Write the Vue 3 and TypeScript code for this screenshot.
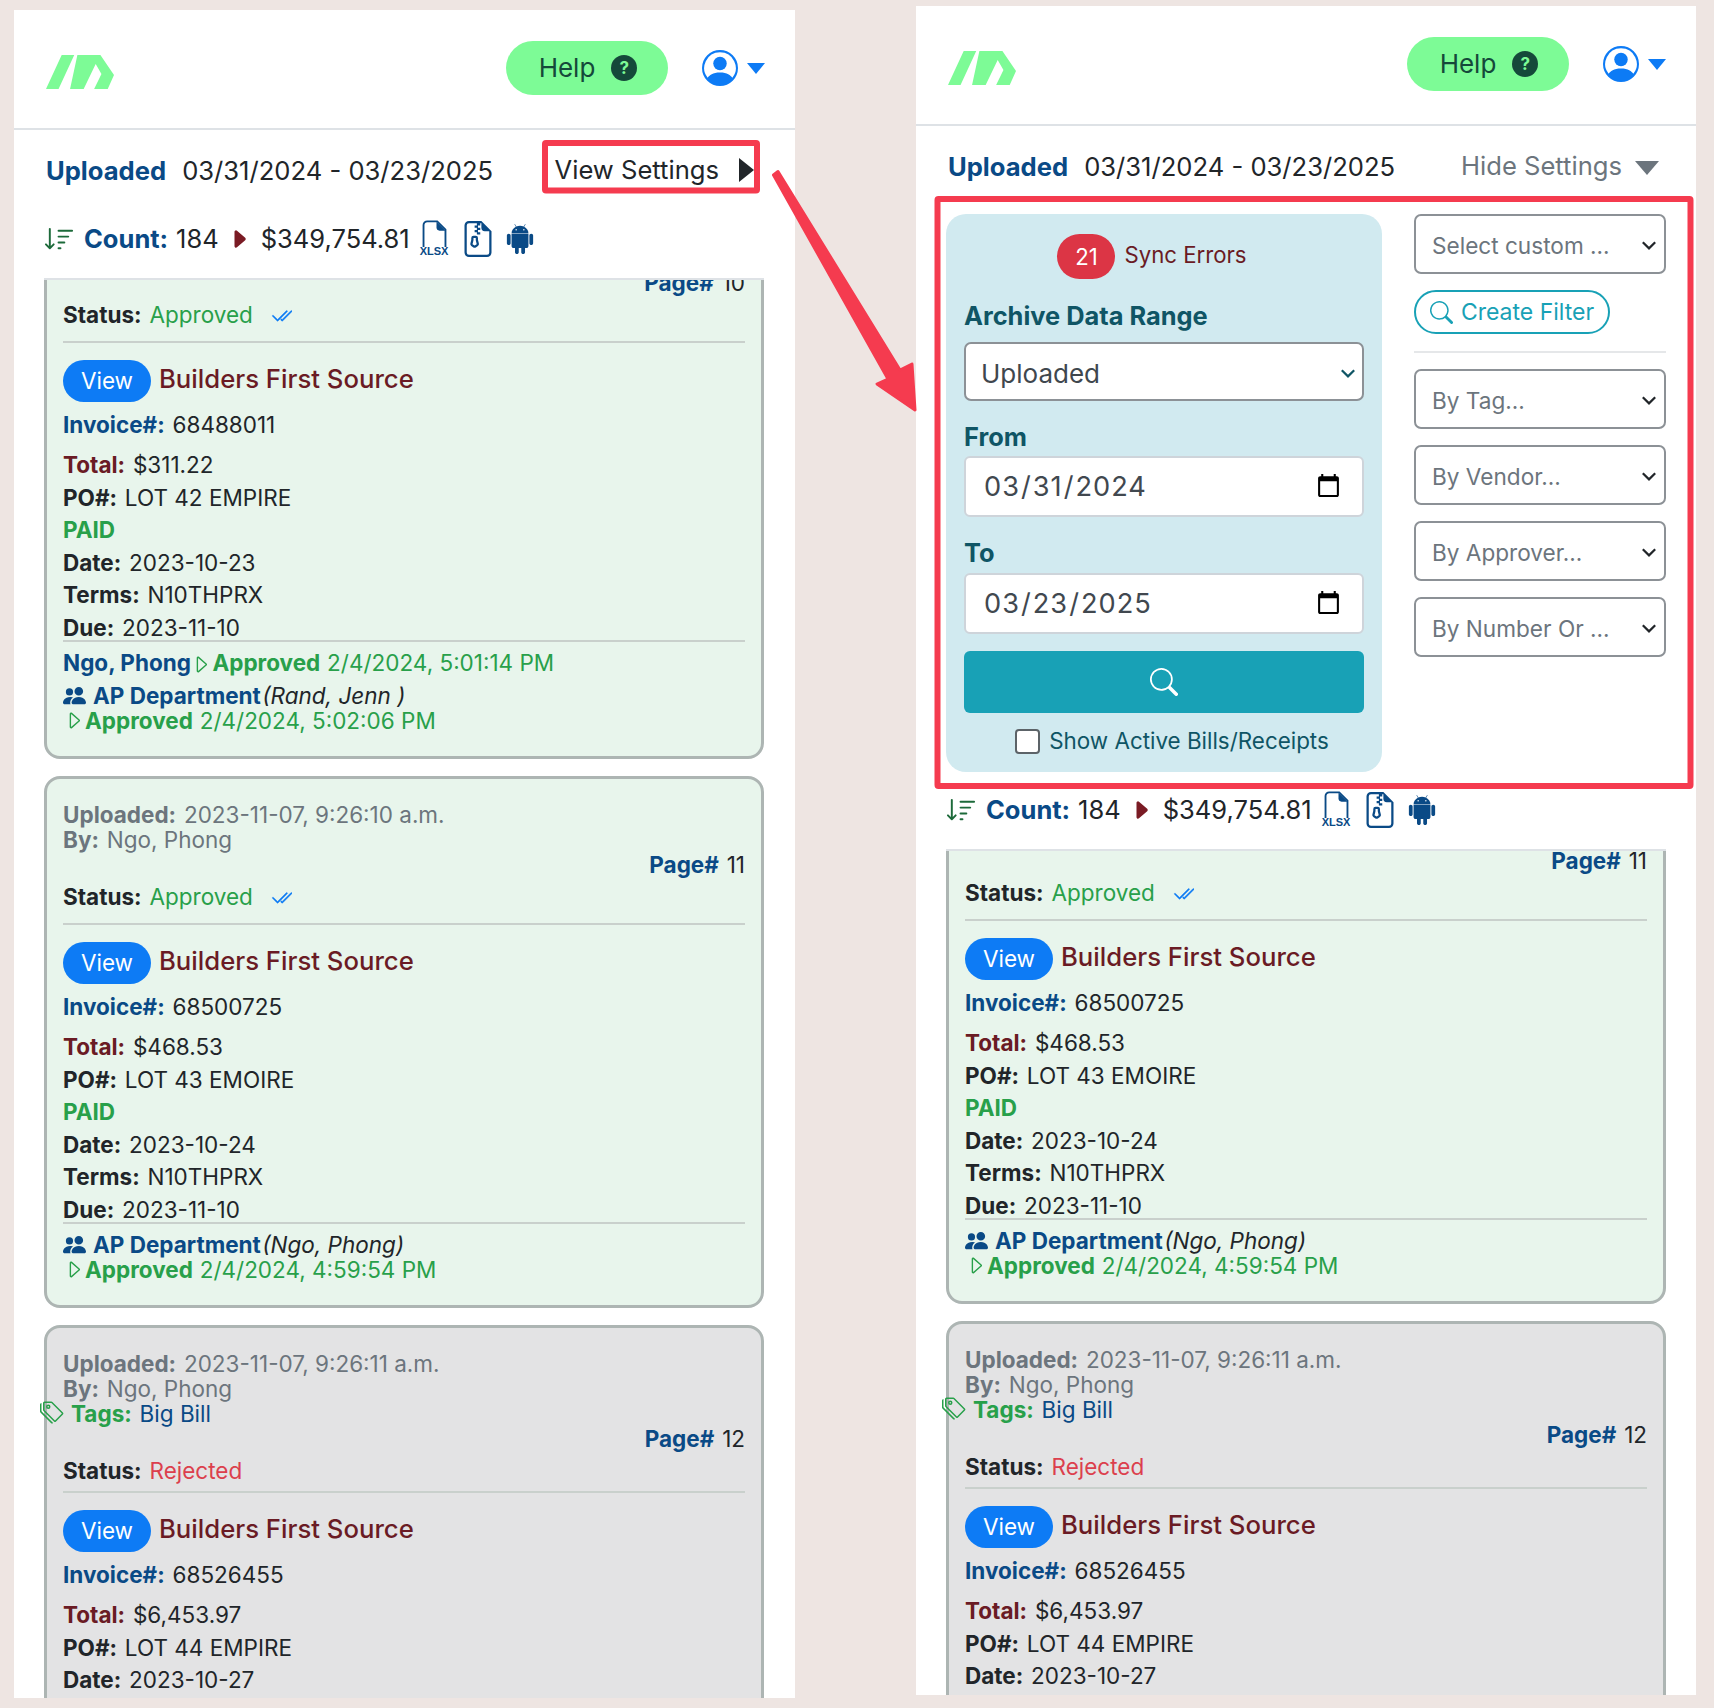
<script setup lang="ts">
interface Approval { name?: string; group?: string; who?: string; when: string }
interface Bill {
  uploaded: string; by: string; tags?: string; page: number; status: string; rejected?: boolean;
  invoice: string; total: string; po: string; paid: boolean; date: string; terms?: string; due?: string;
  approvals: Approval[];
}
const card10: Bill = { uploaded: '2023-11-07, 9:26:10 a.m.', by: 'Ngo, Phong', page: 10, status: 'Approved',
  invoice: '68488011', total: '$311.22', po: 'LOT 42 EMPIRE', paid: true, date: '2023-10-23', terms: 'N10THPRX', due: '2023-11-10',
  approvals: [ { name: 'Ngo, Phong', when: '2/4/2024, 5:01:14 PM' }, { group: 'AP Department', who: '(Rand, Jenn )', when: '2/4/2024, 5:02:06 PM' } ] }
const card11: Bill = { uploaded: '2023-11-07, 9:26:10 a.m.', by: 'Ngo, Phong', page: 11, status: 'Approved',
  invoice: '68500725', total: '$468.53', po: 'LOT 43 EMOIRE', paid: true, date: '2023-10-24', terms: 'N10THPRX', due: '2023-11-10',
  approvals: [ { group: 'AP Department', who: '(Ngo, Phong)', when: '2/4/2024, 4:59:54 PM' } ] }
const card12: Bill = { uploaded: '2023-11-07, 9:26:11 a.m.', by: 'Ngo, Phong', tags: 'Big Bill', page: 12, status: 'Rejected', rejected: true,
  invoice: '68526455', total: '$6,453.97', po: 'LOT 44 EMPIRE', paid: false, date: '2023-10-27', approvals: [] }
const panels = [
  { key: 'a', open: false, bills: [card10, card11, card12] },
  { key: 'b', open: true, bills: [card11, card12] },
]
const filters = ['By Tag...', 'By Vendor...', 'By Approver...', 'By Number Or ...']
</script>

<template>
  <div class="page">
    <section v-for="p in panels" :key="p.key" class="panel" :class="{ open: p.open }">
      <header class="top">
        <svg class="logo" viewBox="0 0 65 34" preserveAspectRatio="none"><path d="M15 0H27L12 34H0ZM30 0H52L65 20 59 34H46L53 19 47.5 9 36 34H23Z" /></svg>
        <div class="top-right">
          <div class="help">Help <span class="q">?</span></div>
          <svg class="user" viewBox="0 0 16 16"><path d="M11 6a3 3 0 1 1-6 0 3 3 0 0 1 6 0z" /><path fill-rule="evenodd" d="M0 8a8 8 0 1 1 16 0A8 8 0 0 1 0 8zm8-7a7 7 0 0 0-5.468 11.37C3.242 11.226 4.805 10 8 10s4.757 1.225 5.468 2.37A7 7 0 0 0 8 1z" /></svg>
          <span class="user-caret"></span>
        </div>
      </header>

      <div class="range">
        <span class="navy b">Uploaded</span>
        <span class="dates">03/31/2024 - 03/23/2025</span>
        <span class="toggle" :class="{ muted: p.open }">
          {{ p.open ? 'Hide Settings' : 'View Settings' }}
          <span :class="p.open ? 'tri-down' : 'tri-right'"></span>
        </span>
      </div>

      <div v-if="p.open" class="settings">
        <div class="range-box">
          <div class="sync"><span class="badge">21</span><span class="sync-text">Sync Errors</span></div>
          <div class="lbl lbl-archive">Archive Data Range</div>
          <div class="sel-wrap teal">
            <select class="sel-main"><option>Uploaded</option></select>
            <svg class="chev" viewBox="0 0 16 16"><path d="M2.5 5.5 8 11l5.5-5.5" /></svg>
          </div>
          <div class="lbl lbl-from">From</div>
          <input class="date" type="date" value="2024-03-31" />
          <div class="lbl lbl-to">To</div>
          <input class="date date-to" type="date" value="2025-03-23" />
          <button class="go" type="button">
            <svg viewBox="0 0 16 16" width="28" height="28"><path d="M11.742 10.344a6.5 6.5 0 1 0-1.397 1.398h-.001c.03.04.062.078.098.115l3.85 3.85a1 1 0 0 0 1.415-1.414l-3.85-3.85a1.007 1.007 0 0 0-.115-.1zM12 6.5a5.5 5.5 0 1 1-11 0 5.5 5.5 0 0 1 11 0z" /></svg>
          </button>
          <label class="active"><span class="box"></span>Show Active Bills/Receipts</label>
        </div>
        <div class="filter-col">
          <div class="sel-wrap">
            <select class="sel"><option>Select custom ...</option></select>
            <svg class="chev" viewBox="0 0 16 16"><path d="M2.5 5.5 8 11l5.5-5.5" /></svg>
          </div>
          <div class="create">
            <svg viewBox="0 0 16 16" width="23" height="23"><path d="M11.742 10.344a6.5 6.5 0 1 0-1.397 1.398h-.001c.03.04.062.078.098.115l3.85 3.85a1 1 0 0 0 1.415-1.414l-3.85-3.85a1.007 1.007 0 0 0-.115-.1zM12 6.5a5.5 5.5 0 1 1-11 0 5.5 5.5 0 0 1 11 0z" /></svg>
            Create Filter
          </div>
          <hr class="filter-hr" />
          <div v-for="f in filters" :key="f" class="sel-wrap by">
            <select class="sel"><option>{{ f }}</option></select>
            <svg class="chev" viewBox="0 0 16 16"><path d="M2.5 5.5 8 11l5.5-5.5" /></svg>
          </div>
        </div>
      </div>

      <div class="count">
        <svg class="ic-sort" viewBox="0 0 16 16"><path d="M3.5 2.5a.5.5 0 0 0-1 0v8.793l-1.146-1.147a.5.5 0 0 0-.708.708l2 1.999.007.007a.497.497 0 0 0 .7-.006l2-2a.5.5 0 0 0-.707-.708L3.5 11.293zm3.5 1a.5.5 0 0 1 .5-.5h7a.5.5 0 0 1 0 1h-7a.5.5 0 0 1-.5-.5M7.5 6a.5.5 0 0 0 0 1h5a.5.5 0 0 0 0-1zm0 3a.5.5 0 0 0 0 1h3a.5.5 0 0 0 0-1zm0 3a.5.5 0 0 0 0 1h1a.5.5 0 0 0 0-1z" /></svg>
        <span class="navy b">Count:</span>
        <span class="n184">184</span>
        <svg class="ic-caret" viewBox="0 0 16 16"><path d="m12.14 8.753-5.482 4.796c-.646.566-1.658.106-1.658-.753V3.204a1 1 0 0 1 1.659-.753l5.48 4.796a1 1 0 0 1 0 1.506z" /></svg>
        <span>$349,754.81</span>
        <span class="xlsx">
          <svg viewBox="0 0 16 16"><path fill="none" stroke="currentColor" stroke-width="1.1" d="M1.5 16V3a2.2 2.2 0 0 1 2.2-2.2H9.6L14.5 5.7V16" /><path d="M9.2 1 14.5 6.3H11a1.8 1.8 0 0 1-1.8-1.8z" /></svg>
          <em>XLSX</em>
        </span>
        <svg class="ic-zip" viewBox="2 0 12 16"><path d="M5 7.5a1 1 0 0 1 1-1h1a1 1 0 0 1 1 1v.938l.4 1.599a1 1 0 0 1-.416 1.074l-.93.62a1 1 0 0 1-1.11 0l-.929-.62a1 1 0 0 1-.415-1.074L5 8.438zm2 0H6v.938a1 1 0 0 1-.03.243l-.4 1.598.93.62.93-.62-.4-1.598A1 1 0 0 1 7 8.438z" /><path fill-rule="evenodd" d="M14 4.5V14a2 2 0 0 1-2 2H4a2 2 0 0 1-2-2V2a2 2 0 0 1 2-2h5.5zm-3 0A1.5 1.5 0 0 1 9.5 3V1h-2v1h-1v1h1v1h-1v1h1v1H9V5H8V4h1V3H8V2h1V1H4a1 1 0 0 0-1 1v12a1 1 0 0 0 1 1h8a1 1 0 0 0 1-1V4.5z" /></svg>
        <svg class="ic-droid" viewBox="0 0 16 16"><path d="m10.213 1.471.691-1.26q.069-.124-.048-.192-.128-.057-.195.058l-.7 1.27A4.8 4.8 0 0 0 8.005.941q-1.032 0-1.956.404l-.7-1.27Q5.281-.037 5.154.02q-.117.069-.049.193l.691 1.259a4.25 4.25 0 0 0-1.673 1.476A3.7 3.7 0 0 0 3.5 5.02h9q0-1.125-.623-2.072a4.27 4.27 0 0 0-1.664-1.476ZM6.22 3.303a.37.37 0 0 1-.267.11.35.35 0 0 1-.263-.11.37.37 0 0 1-.107-.264.37.37 0 0 1 .107-.265.35.35 0 0 1 .263-.11q.155 0 .267.11a.36.36 0 0 1 .112.265.36.36 0 0 1-.112.264m4.101 0a.35.35 0 0 1-.262.11.37.37 0 0 1-.268-.11.36.36 0 0 1-.112-.264q0-.154.112-.265a.37.37 0 0 1 .268-.11q.155 0 .262.11a.37.37 0 0 1 .107.265q0 .153-.107.264M3.5 11.77q0 .441.311.75.311.306.76.307h.758l.01 2.182q0 .414.292.703a.96.96 0 0 0 .7.288.97.97 0 0 0 .71-.288.95.95 0 0 0 .292-.703v-2.182h1.343v2.182q0 .414.293.703a.97.97 0 0 0 .71.288.97.97 0 0 0 .71-.288.95.95 0 0 0 .292-.703v-2.182h.76q.436 0 .749-.308.31-.307.311-.75V5.365h-9zm10.495-6.587a.98.98 0 0 0-.702.278.9.9 0 0 0-.293.685v4.063q0 .406.293.69a.97.97 0 0 0 .702.284q.42 0 .712-.284a.92.92 0 0 0 .293-.69V6.146a.9.9 0 0 0-.293-.685 1 1 0 0 0-.712-.278m-12.702.283a1 1 0 0 1 .712-.283q.41 0 .702.283a.9.9 0 0 1 .293.68v4.063a.93.93 0 0 1-.288.69.97.97 0 0 1-.707.284 1 1 0 0 1-.712-.284.92.92 0 0 1-.293-.69V6.146q0-.396.293-.68" /></svg>
      </div>

      <div class="list">
        <article v-for="(c, i) in p.bills" :key="c.page" class="card" :class="{ grey: c.rejected }">
          <template v-if="i > 0">
            <div class="meta"><b>Uploaded:</b> {{ c.uploaded }}</div>
            <div class="meta"><b>By:</b> {{ c.by }}</div>
          </template>
          <div v-if="c.tags" class="tags">
            <svg viewBox="0 0 16 16"><path d="M3 2v4.586l7 7L14.586 9l-7-7H3zM2 2a1 1 0 0 1 1-1h4.586a1 1 0 0 1 .707.293l7 7a1 1 0 0 1 0 1.414l-4.586 4.586a1 1 0 0 1-1.414 0l-7-7A1 1 0 0 1 2 6.586V2z" /><path d="M5.5 5a.5.5 0 1 1 0-1 .5.5 0 0 1 0 1zm0 1a1.5 1.5 0 1 0 0-3 1.5 1.5 0 0 0 0 3zM1 7.086a1 1 0 0 0 .293.707L8.75 15.25l-.043.043a1 1 0 0 1-1.414 0l-7-7A1 1 0 0 1 0 7.586V3a1 1 0 0 1 1-1v5.086z" /></svg>
            <b>Tags:</b> <span>{{ c.tags }}</span>
          </div>
          <div class="page-no"><b>Page#</b> {{ c.page }}</div>
          <div class="line status">
            <b class="ink">Status:</b> <span :class="c.rejected ? 'red' : 'green'">{{ c.status }}</span>
            <svg v-if="!c.rejected" class="ic-check" viewBox="0 0 16 16"><path d="M12.354 4.354a.5.5 0 0 0-.708-.708L5 10.293 1.854 7.146a.5.5 0 1 0-.708.708l3.5 3.5a.5.5 0 0 0 .708 0l7-7zm-4.208 7-.896-.897.707-.707.543.543 6.646-6.647a.5.5 0 0 1 .708.708l-7 7a.5.5 0 0 1-.708 0z" /></svg>
          </div>
          <hr class="rule rule-a" :class="{ tight: c.rejected }" />
          <div class="vendor"><span class="view">View</span><span class="vendor-name">Builders First Source</span></div>
          <div class="line invoice"><b class="navy">Invoice#:</b> {{ c.invoice }}</div>
          <div class="line total"><b class="maroon">Total:</b> {{ c.total }}</div>
          <div class="line"><b>PO#:</b> {{ c.po }}</div>
          <div v-if="c.paid" class="line green b">PAID</div>
          <div class="line"><b>Date:</b> {{ c.date }}</div>
          <div v-if="c.terms" class="line"><b>Terms:</b> {{ c.terms }}</div>
          <div v-if="c.due" class="line"><b>Due:</b> {{ c.due }}</div>
          <hr v-if="c.approvals.length" class="rule rule-b" />
          <div v-for="a in c.approvals" :key="a.when" class="appr" :class="{ grp: a.group }">
            <template v-if="a.name">
              <b class="navy">{{ a.name }}</b>
              <svg class="ic-tri" viewBox="4.5 2 8 12"><path d="M6 12.796V3.204L11.481 8 6 12.796zm.659.753 5.48-4.796a1 1 0 0 0 0-1.506L6.66 2.451C6.011 1.885 5 2.345 5 3.204v9.592a1 1 0 0 0 1.659.753z" /></svg>
              <span class="green"><b>Approved</b> {{ a.when }}</span>
            </template>
            <template v-else>
              <div class="grp-line">
                <svg class="ic-people" viewBox="0 0 16 16"><path d="M7 14s-1 0-1-1 1-4 5-4 5 3 5 4-1 1-1 1zm4-6a3 3 0 1 0 0-6 3 3 0 0 0 0 6m-5.784 6A2.24 2.24 0 0 1 5 13c0-1.355.68-2.75 1.936-3.72A6.3 6.3 0 0 0 5 9c-4 0-5 3-5 4s1 1 1 1zM4.5 8a2.5 2.5 0 1 0 0-5 2.5 2.5 0 0 0 0 5" /></svg>
                <b class="navy">{{ a.group }}</b><i>{{ a.who }}</i>
              </div>
              <div class="grp-line second">
                <svg class="ic-tri" viewBox="4.5 2 8 12"><path d="M6 12.796V3.204L11.481 8 6 12.796zm.659.753 5.48-4.796a1 1 0 0 0 0-1.506L6.66 2.451C6.011 1.885 5 2.345 5 3.204v9.592a1 1 0 0 0 1.659.753z" /></svg>
                <span class="green"><b>Approved</b> {{ a.when }}</span>
              </div>
            </template>
          </div>
        </article>
      </div>
    </section>

    <svg class="notes" viewBox="0 0 1714 1708" width="1714" height="1708">
      <rect x="545" y="143" width="212" height="47.5" rx="1" fill="none" stroke="#f53b4f" stroke-width="6" />
      <rect x="937.5" y="199" width="753" height="587" rx="1" fill="none" stroke="#f53b4f" stroke-width="6" />
      <path d="M773.5 175 888 379 877 384 915 410 912 364 900 370 778 171.5Z" fill="#f53b4f" stroke="#f53b4f" stroke-width="3" stroke-linejoin="round" />
    </svg>
  </div>
</template>

<style>
body { background: #eee5e2; }
</style>

<style scoped>
.page {
  position: relative; width: 1714px; height: 1708px; overflow: hidden; display: flex; align-items: flex-start;
  background: #eee5e2; font-family: Inter, "Liberation Sans", sans-serif; font-size: 22.5px; line-height: 32.5px; color: #212529;
}
.panel { width: 781px; height: 1688px; margin: 10px 0 0 14px; background: #fff; overflow: hidden; }
.panel.open { width: 780px; height: 1689px; margin: 6px 0 0 121px; }
.b { font-weight: 700; }
.navy { color: #0a4a86; }
.maroon { color: #6a1b24; }
.green { color: #28a04a; }
.red { color: #dc3f4d; }
.ink { color: #212529; }

.top { height: 118px; border-bottom: 2px solid #dee2e6; display: flex; align-items: center; justify-content: space-between; padding: 0 30px 0 32px; }
.logo { width: 68px; height: 34px; fill: #7dfb96; margin-top: 6px; }
.top-right { display: flex; align-items: center; margin-top: -2px; }
.help { width: 162px; height: 54px; border-radius: 27px; background: #7dfb96; display: flex; align-items: center; justify-content: center; gap: 16px; padding-left: 2px; box-sizing: border-box; font-size: 26px; color: #15493a; }
.q { width: 26px; height: 26px; border-radius: 50%; background: #15493a; color: #7dfb96; font-size: 17px; line-height: 26px; text-align: center; font-weight: 700; }
.user { width: 36px; height: 36px; fill: #0d7bf5; margin-left: 34px; }
.user-caret { width: 0; height: 0; border-left: 9.5px solid transparent; border-right: 9.5px solid transparent; border-top: 11px solid #0d7bf5; margin-left: 9px; }

.range { height: 80px; display: flex; align-items: center; padding: 2px 0 0 32px; box-sizing: border-box; font-size: 25.6px; position: relative; }
.range .dates { margin-left: 16px; }
.toggle { margin-left: auto; margin-right: 41px; margin-top: -2px; display: flex; align-items: center; gap: 20px; }
.toggle.muted { color: #6c757d; margin-right: 37px; gap: 13px; }
.tri-right { width: 0; height: 0; border-top: 12px solid transparent; border-bottom: 12px solid transparent; border-left: 15px solid #212529; }
.tri-down { width: 0; height: 0; border-left: 12px solid transparent; border-right: 12px solid transparent; border-top: 14px solid #6c757d; margin-top: 4px; }

.settings { display: flex; gap: 32px; padding: 8px 0 9px 30px; }
.range-box { width: 436px; height: 558px; background: #d1eaf0; border-radius: 20px; padding: 20px 18px 0; box-sizing: border-box; }
.sync { display: flex; justify-content: center; align-items: center; gap: 9px; height: 45px; color: #6a1b24; padding-right: 24px; font-size: 22.2px; }
.sync-text { margin-top: -2px; }
.badge { width: 58px; height: 45px; border-radius: 23px; background: #dc3545; color: #fff; text-align: center; line-height: 45px; }
.lbl { font-weight: 700; color: #0f5565; font-size: 25.4px; line-height: 30px; }
.lbl-archive { margin-top: 22px; }
.lbl-from, .lbl-to { margin-top: 21px; }
.sel-wrap { position: relative; }
.chev { position: absolute; right: 8px; top: 50%; width: 18px; height: 18px; margin-top: -8px; fill: none; stroke: #212529; stroke-width: 2; pointer-events: none; }
.sel-wrap.teal { margin-top: 11px; }
.teal .chev { stroke: #0f5565; right: 7px; }
.sel-main { display: block; width: 400px; height: 59px; border: 2.5px solid #8c9196; border-radius: 7px; background: #fff; font: 26px Inter, sans-serif; color: #3f474e; padding: 3px 0 0 15px; appearance: none; box-sizing: border-box; }
.date { display: block; width: 400px; height: 61px; margin-top: 4px; box-sizing: border-box; border: 2px solid #ced4da; border-radius: 6px; background: #fff; font: 27.2px Inter, sans-serif; letter-spacing: 1px; color: #41484f; padding: 0 18px 0 17px; }
.date-to { margin-top: 5px; }
.go { width: 400px; height: 62px; margin-top: 17px; border: 0; border-radius: 6px; background: #18a1b6; display: flex; align-items: center; justify-content: center; }
.go svg { fill: #fff; }
.active { display: flex; align-items: center; justify-content: center; gap: 9px; margin-top: 12px; padding-left: 16px; color: #0f5565; font-size: 22.4px; }
.box { width: 25px; height: 25px; box-sizing: border-box; border: 2px solid #5c6368; border-radius: 4px; background: #fff; }
.filter-col { width: 252px; }
.sel { display: block; width: 252px; height: 60px; border: 2.5px solid #8c9196; border-radius: 7px; background: #fff; font: 22.6px Inter, sans-serif; color: #6c757d; padding: 3px 0 0 16px; appearance: none; box-sizing: border-box; }
.sel-wrap.by { margin-bottom: 16px; }
.create { width: 196px; height: 44px; margin-top: 16px; box-sizing: border-box; border: 2px solid #18a1b6; border-radius: 22px; color: #18a1b6; display: flex; align-items: center; justify-content: center; gap: 8px; font-size: 23px; }
.create svg { fill: #18a1b6; }
.filter-hr { margin: 17px 0 16px; border: 0; border-top: 2px solid #e5e7e9; }

.count { height: 58px; padding: 0 0 10px 30px; display: flex; align-items: center; font-size: 25.5px; }
.ic-sort { width: 31px; height: 31px; fill: #1d6a3a; margin-right: 9px; }
.n184 { margin-left: 8px; }
.ic-caret { width: 24px; height: 24px; fill: #7a1b24; margin: 0 10px 0 8px; }
.xlsx { position: relative; width: 29px; height: 32px; margin-left: 10px; color: #0a4a86; fill: #0a4a86; margin-top: -6px; }
.xlsx svg { width: 29px; height: 27px; display: block; }
.xlsx em { position: absolute; left: 0; top: 25px; font: 700 11px/12px "Liberation Sans", sans-serif; }
.ic-zip { width: 28px; height: 36px; fill: #0a4a86; margin-left: 15px; }
.ic-droid { width: 30px; height: 32px; fill: #0a4a86; margin-left: 13px; }

.list { position: relative; width: 720px; height: 1420px; border-top: 2px solid #dee2e6; margin: 0 30px; clip-path: inset(0 0 0 -14px); }
.list::before { content: ""; position: absolute; left: 0; right: 0; top: -2px; height: 2px; background: #dee2e6; z-index: 1; }
.card { box-sizing: border-box; border: 3px solid #adb5b3; border-radius: 16px; background: #e8f5ec; padding: 23px 16px 23px; margin-bottom: 17px; position: relative; }
.card b { margin-right: 1.5px; }
.card.grey { background: #e3e3e4; }
.card:first-child { margin-top: -36px; }
.open .card:first-child { margin-top: -29px; }
.meta { line-height: 25px; color: #6c757d; }
.tags { line-height: 25px; color: #28a04a; padding-left: 8px; position: relative; }
.tags span { color: #0a4a86; }
.tags svg { position: absolute; left: -23px; top: -1px; width: 24px; height: 24px; fill: #28a04a; }
.page-no { line-height: 25px; text-align: right; }
.page-no b { color: #0a4a86; }
.status { margin-top: 4px; display: flex; gap: 6.5px; align-items: center; }
.ic-check { width: 21px; height: 21px; fill: #0d7bf5; stroke: #0d7bf5; stroke-width: .35; margin-left: 12px; margin-top: 3px; }
.rule { border: 0; border-top: 2px solid #c9d0cc; margin: 0; }
.rule-a { margin-top: 9px; }
.rule-a.tight { margin-top: 3px; }
.vendor { display: flex; align-items: center; margin-top: 17px; height: 42px; }
.view { width: 88px; height: 42px; border-radius: 21px; background: #0d7bf5; color: #fff; text-align: center; line-height: 42px; }
.vendor-name { margin-left: 8px; font-size: 25.7px; color: #6a1b24; margin-top: -3px; font-weight: 500; }
.invoice { margin-top: 7px; }
.total { margin-top: 8px; }
.rule-b { margin-top: -4px; margin-bottom: 8px; }
.appr { line-height: 25px; }
.appr:not(.grp) { margin-bottom: 8px; }
.appr .green b { margin-right: .5px; }
.grp-line { display: flex; align-items: center; white-space: pre; }
.ic-people { width: 23px; height: 23px; fill: #0a4a86; margin-right: 7px; }
.second { padding-left: 6px; }
.ic-tri { width: 11px; height: 17px; fill: #28a04a; margin: 0 5px 0 4px; vertical-align: -2px; }
.second .ic-tri { margin: 0 5px 0 0; }
.notes { position: absolute; left: 0; top: 0; pointer-events: none; }
</style>
